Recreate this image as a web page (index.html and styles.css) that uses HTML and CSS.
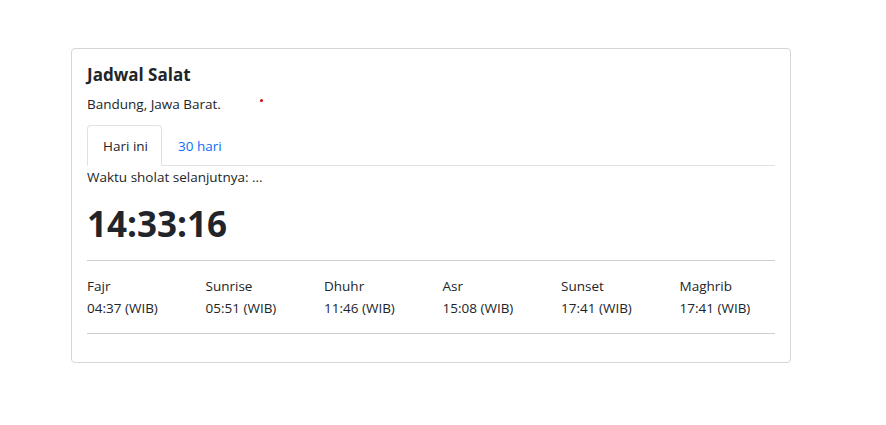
FILE: index.html
```html
<!DOCTYPE html>
<html lang="id">
<head>
<meta charset="utf-8">
<title>Jadwal Salat</title>
<link rel="stylesheet" href="styles.css">
</head>
<body>
<div class="card">
  <h1 class="title">Jadwal Salat</h1>
  <div class="loc">Bandung, Jawa Barat.<span class="dot"></span></div>
  <ul class="tabs">
    <li class="tab active">Hari ini</li>
    <li class="tab link">30 hari</li>
  </ul>
  <div class="next">Waktu sholat selanjutnya: ...</div>
  <div class="clock">14:33:16</div>
  <hr class="rule">
  <div class="times">
    <div class="t"><div>Fajr</div><div>04:37 (WIB)</div></div>
    <div class="t"><div>Sunrise</div><div>05:51 (WIB)</div></div>
    <div class="t"><div>Dhuhr</div><div>11:46 (WIB)</div></div>
    <div class="t"><div>Asr</div><div>15:08 (WIB)</div></div>
    <div class="t"><div>Sunset</div><div>17:41 (WIB)</div></div>
    <div class="t"><div>Maghrib</div><div>17:41 (WIB)</div></div>
  </div>
  <hr class="rule">
</div>
</body>
</html>
```
FILE: styles.css
```css
* { box-sizing: border-box; }
html, body { margin: 0; padding: 0; background: #fff; }
body {
  font-family: "Open Sans", "Noto Sans", sans-serif;
  font-size: 13.5px;
  color: #212529;
  padding: 48px 0 0 71px;
}
.card {
  width: 720px;
  height: 315px;
  border: 1px solid #d6d6d6;
  border-radius: 4px;
  padding: 14px 15px 15px 15px;
}
.title {
  margin: 0;
  font-size: 17px;
  font-weight: 700;
  line-height: 24px;
}
.loc {
  margin-top: 8px;
  line-height: 18px;
  position: relative;
}
.dot {
  position: absolute;
  left: 173px;
  top: 4px;
  width: 3px;
  height: 3px;
  border-radius: 50%;
  background: #e3000f;
}
.tabs {
  list-style: none;
  margin: 12px 0 0 0;
  padding: 0;
  display: flex;
  border-bottom: 1px solid #dee2e6;
}
.tab {
  padding: 11px 13px 10px 15px;
  line-height: 18px;
  margin-bottom: -1px;
  border: 1px solid transparent;
  border-radius: 4px 4px 0 0;
}
.tab.active {
  border-color: #dee2e6 #dee2e6 #fff;
  background: #fff;
}
.tab.link { color: #0d6efd; padding-left: 15px; }
.next { margin-top: 2px; line-height: 18px; }
.clock {
  margin-top: 16px;
  font-size: 35px;
  font-weight: 700;
  line-height: 44px;
}
.rule {
  margin: 0;
  border: 0;
  border-top: 1px solid #cfcfcf;
}
.clock + .rule { margin-top: 14px; }
.times {
  display: grid;
  grid-template-columns: repeat(6, 118.5px);
  padding: 14px 0 14px;
  line-height: 22px;
}
```
